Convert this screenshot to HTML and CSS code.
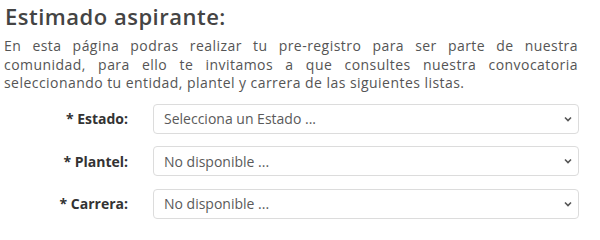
FILE: index.html
```html
<!DOCTYPE html>
<html lang="es">
<head>
<meta charset="utf-8">
<link rel="stylesheet" href="styles.css">
</head>
<body>
<div class="page">
  <h2 class="title">Estimado aspirante:</h2>
  <p class="intro"><span class="line">En esta página podras realizar tu pre-registro para ser parte de nuestra</span> <span class="line">comunidad, para ello te invitamos a que consultes nuestra convocatoria</span> <span class="line last">seleccionando tu entidad, plantel y carrera de las siguientes listas.</span></p>
  <form class="form">
    <label class="label" for="estado">* Estado:</label>
    <div class="field">
      <select id="estado" class="select"><option>Selecciona un Estado ...</option></select>
      <svg class="chev" width="8" height="6" viewBox="0 0 8 6"><path d="M1 1.5 L4 4.5 L7 1.5" fill="none" stroke="#555" stroke-width="1.6"/></svg>
    </div>
    <label class="label" for="plantel">* Plantel:</label>
    <div class="field">
      <select id="plantel" class="select"><option>No disponible ...</option></select>
      <svg class="chev" width="8" height="6" viewBox="0 0 8 6"><path d="M1 1.5 L4 4.5 L7 1.5" fill="none" stroke="#555" stroke-width="1.6"/></svg>
    </div>
    <label class="label" for="carrera">* Carrera:</label>
    <div class="field">
      <select id="carrera" class="select"><option>No disponible ...</option></select>
      <svg class="chev" width="8" height="6" viewBox="0 0 8 6"><path d="M1 1.5 L4 4.5 L7 1.5" fill="none" stroke="#555" stroke-width="1.6"/></svg>
    </div>
  </form>
</div>
</body>
</html>
```
FILE: styles.css
```css
html, body {
  margin: 0;
  padding: 0;
  background: #fff;
}
.page {
  width: 574px;
  padding: 0 0 0 4px;
  font-family: "Open Sans", "DejaVu Sans", sans-serif;
  color: #555;
}
.title {
  margin: 0;
  padding: 1px 0 0 1px;
  font-size: 22px;
  line-height: 30px;
  font-weight: 600;
  letter-spacing: 0.5px;
  color: #444;
}
.intro {
  margin: 6px 0 0 0;
  font-size: 14px;
  line-height: 18.5px;
  letter-spacing: 0.45px;
  color: #555;
}
.line {
  display: block;
  text-align: justify;
  text-align-last: justify;
  white-space: nowrap;
}
.line.last {
  text-align-last: left;
}
.form {
  display: grid;
  grid-template-columns: 124px 426px;
  column-gap: 25px;
  row-gap: 12.5px;
  margin-top: 11px;
  align-items: center;
}
.label {
  text-align: right;
  font-weight: 700;
  font-size: 14px;
  color: #333;
}
.field {
  position: relative;
  height: 30px;
}
.select {
  appearance: none;
  -webkit-appearance: none;
  box-sizing: border-box;
  width: 100%;
  height: 30px;
  border: 1px solid #dcdcdc;
  border-radius: 4px;
  background: #fff;
  padding: 0 24px 0 10px;
  font-family: "Open Sans", "DejaVu Sans", sans-serif;
  font-size: 14px;
  color: #5a5a5a;
  margin: 0;
}
.chev {
  position: absolute;
  right: 7px;
  top: 12px;
  pointer-events: none;
}
```
